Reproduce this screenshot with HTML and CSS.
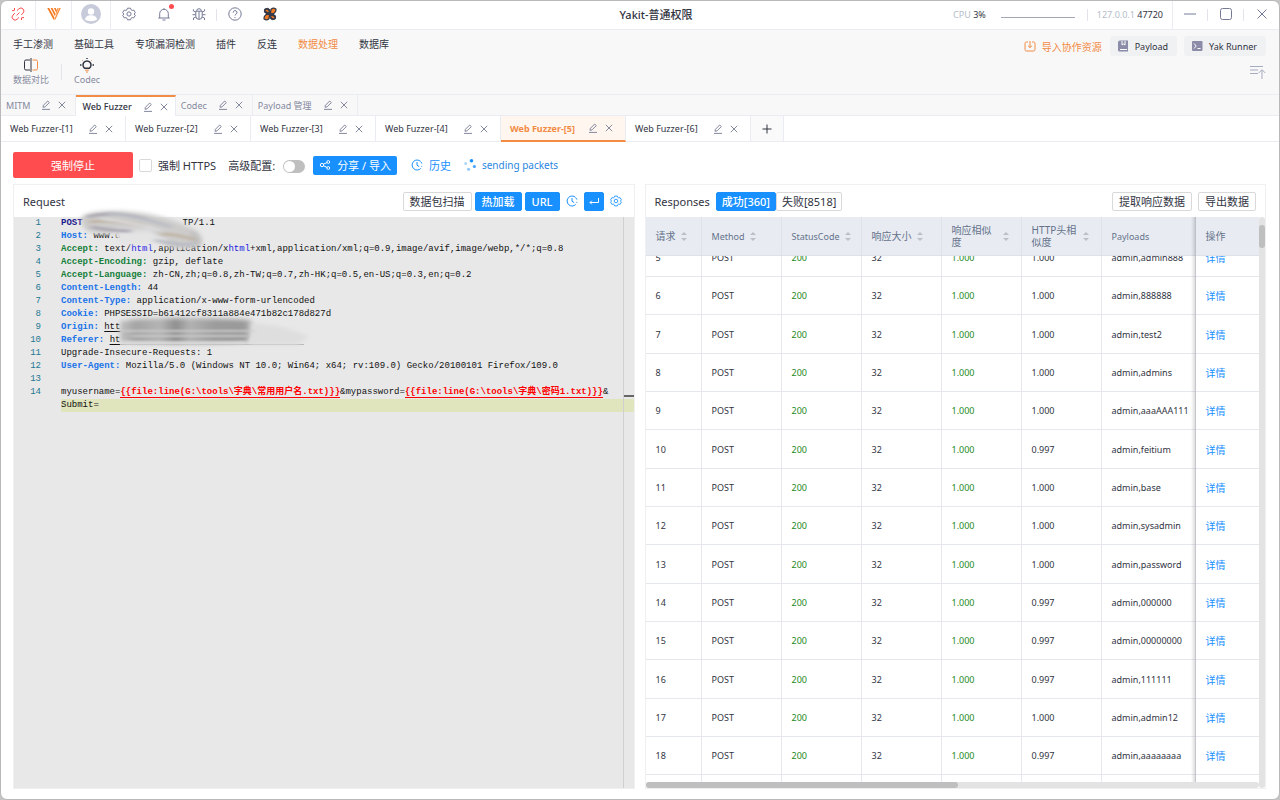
FILE: index.html
```html
<!doctype html>
<html lang="zh-CN">
<head>
  <meta charset="utf-8" />
  <meta name="viewport" content="width=device-width,initial-scale=1" />
  <title>Yakit-普通权限</title>
  <link rel="stylesheet" href="styles.css">
</head>

<body>
  <!-- shared icons -->
  <svg class="sprite" aria-hidden="true">
    <symbol id="i-edit" viewBox="0 0 10 10"><path d="M2 7.3 2.4 5.3 6.7 1l1.6 1.6-4.3 4.3zM1 9.4h8"/></symbol>
    <symbol id="i-close" viewBox="0 0 10 10"><path d="M1.8 1.8l6.4 6.4M8.2 1.8 1.8 8.2"/></symbol>
    <symbol id="i-gear" viewBox="0 0 14 14"><path d="M5.5 1.2h3l.5 1.5 1.2.7 1.6-.3 1.5 2.5L12.2 7l1.1 1.4-1.5 2.5-1.6-.3-1.2.7-.5 1.5h-3L5 11.3l-1.2-.7-1.6.3L.7 8.4 1.8 7 .7 5.6l1.5-2.5 1.6.3L5 2.7z"/><circle cx="7" cy="7" r="2.1"/></symbol>
    <symbol id="i-history" viewBox="0 0 12 12"><path d="M9.8 9.4A5 5 0 1 1 9.7 2.5M10.9 6.8a5 5 0 0 1-.3 1M10.1 3.1l.8 1.5M6 3v3.2l2.2 1.4"/></symbol>
  </svg>

  <div class="window">
    <header class="titlebar">
      <div class="title-left">
        <button class="cell red" type="button" aria-label="断开连接"><svg class="ic14" viewBox="0 0 14 14"><path d="M6 3.6 7.8 1.9a2.9 2.9 0 0 1 4.2 4.2L10.3 8M8 10.4l-1.8 1.8A2.9 2.9 0 0 1 2 8L3.8 6.2M5.6 8.4l2.8-2.8M3.5 1v2.3M1 3.6h2.2M10.6 10.6H13M10.5 10.8V13"/></svg></button>
        <button class="cell" type="button" aria-label="Yakit"><svg class="logo" viewBox="0 0 14 14"><path d="M.2 1h2l5.300 9.500L6.700 13zM3.600 1h1.900l3.200 6.300-.800 2zM6.900 1h1.800l1.200 2.600-.8 2z" fill="#f47b22"/><path d="M13.800 1h-1.500L7 13l1.400-.6zM11.700 1h-1.200L8.600 6.500l.5.700z" fill="#fa8a35"/></svg></button>
        <button class="cell avatar-cell" type="button" aria-label="用户"><svg class="avatar" viewBox="0 0 20 20"><circle cx="10" cy="10" r="10" fill="#c8ccda"/><circle cx="10" cy="7.5" r="3.2" fill="#fff"/><path d="M4 15.5c.5-3.3 3-4.3 6-4.3s5.5 1 6 4.3c-3 2.3-9 2.3-12 0z" fill="#fff"/></svg></button>
        <button class="tool" type="button" aria-label="设置"><svg class="ic14"><use href="#i-gear"/></svg></button>
        <button class="tool bell" type="button" aria-label="消息"><svg class="ic14" viewBox="0 0 14 14"><path d="M7 1.2v1M1.300 11h11.400M2.700 11V6.600a4.300 4.300 0 0 1 8.600 0V11M5.500 13h3"/></svg></button>
        <button class="tool" type="button" aria-label="反馈"><svg class="ic14" viewBox="0 0 14 14"><path d="M4.700 4a2.300 2.300 0 0 1 4.600 0M3.800 4.200h6.400v5a3.200 3.200 0 0 1-6.400 0zM7 4.500V12M3.800 7.700H.5M13.500 7.700h-3.300M3.900 5.200 1.400 4V2.300M10.100 5.200 12.600 4V2.300M4 10l-2.500 1v2M10 10l2.500 1v2"/></svg></button>
        <span class="sep"></span>
        <button class="tool" type="button" aria-label="帮助"><svg class="ic14" viewBox="0 0 14 14"><circle cx="7" cy="7" r="6.200"/><path d="M5.200 5.600a1.900 1.900 0 1 1 2.700 1.600q-.9.400-.9 1.300M7 10v.9"/></svg></button>
        <button class="tool" type="button" aria-label="插件商店"><svg class="ic14" viewBox="0 0 14 14"><path d="M1.500 2.200Q4.500.3 6.500 2.300L7 6.800 3 6.500Q.6 5.500 1.500 2.200zM12.500 11.800Q9.500 13.700 7.500 11.700L7 7.200l4 .3Q13.400 8.500 12.500 11.800z" fill="#333745" stroke="#333745"/><path d="M8 2.300Q10.500.2 12.800 2 13.500 4.500 11 6.300L7.300 6.800zM6 11.700Q3.500 13.800 1.200 12 .5 9.500 3 7.700L6.700 7.200z" fill="#f47b22" stroke="#333745" stroke-width="1.300"/><path d="M2.800 3.600Q4.500 3 5.300 5M11.200 10.400Q9.500 11 8.700 9" stroke="#f47b22" stroke-width="1.300"/></svg></button>
      </div>
      <h1>Yakit-普通权限</h1>
      <div class="title-right">
        <span class="stat">CPU <b>3%</b></span>
        <span class="cpu-line"></span>
        <span class="sep"></span>
        <span class="stat addr">127.0.0.1 <b>47720</b></span>
        <button class="wbtn first" type="button" aria-label="最小化"><svg class="ic14" viewBox="0 0 14 14"><path d="M1 7h12"/></svg></button>
        <span class="sep"></span>
        <button class="wbtn" type="button" aria-label="最大化"><svg class="ic14" viewBox="0 0 14 14"><rect x="1.500" y="1.500" width="11" height="11" rx="2"/></svg></button>
        <span class="sep"></span>
        <button class="wbtn" type="button" aria-label="关闭"><svg class="ic14" viewBox="0 0 14 14"><path d="M2.500 2.500l9 9M11.500 2.500l-9 9"/></svg></button>
      </div>
    </header>

    <div class="menu">
      <div class="menu-left">
        <nav class="menu-nav">
          <a href="#">手工渗测</a>
          <a href="#">基础工具</a>
          <a href="#">专项漏洞检测</a>
          <a href="#">插件</a>
          <a href="#">反连</a>
          <a href="#" class="on">数据处理</a>
          <a href="#">数据库</a>
        </nav>
        <div class="sub-menu">
          <button type="button"><svg class="ic16" viewBox="0 0 16 16"><path d="M7 3H3a1.500 1.500 0 0 0-1.500 1.500v7A1.500 1.500 0 0 0 3 13h4M8 1v14" stroke="#31343f"/><path d="M9.500 3H13a1.500 1.500 0 0 1 1.500 1.500v7A1.500 1.500 0 0 1 13 13H9.500" stroke="#f28b44"/></svg>数据对比</button>
          <span class="sep"></span>
          <button type="button"><svg class="ic16" viewBox="0 0 16 16"><path d="M5.800 11.300a4 4 0 1 1 4.400 0z" stroke="#31343f" stroke-width="1.500"/><path d="M8 1v1M1 8h1.500M13.500 8H15" stroke="#31343f" stroke-width="1.500"/><path d="M3 3l.7.7M13 3l-.7.700M6 13.200h4M7 15h2" stroke="#f28b44"/></svg>Codec</button>
        </div>
      </div>
      <div class="menu-right">
        <div class="quick">
          <button class="import" type="button"><svg class="ic12" viewBox="0 0 12 12"><path d="M4 2H2.500A1.500 1.500 0 0 0 1 3.500v6A1.500 1.500 0 0 0 2.500 11h7A1.500 1.500 0 0 0 11 9.500v-6A1.500 1.500 0 0 0 9.500 2H8M6 1v6.500M4 5.700l2 1.900 2-1.900"/></svg>导入协作资源</button>
          <button class="chip" type="button"><svg class="ic12" viewBox="0 0 12 12"><path d="M3 .5h8v11H2.500A1.500 1.500 0 0 1 1 10V2.500A2 2 0 0 1 3 .500z" fill="#8a8ca8" stroke="none"/><path d="M5 1v4l1.500-1L8 5V1M3 9.500h7" stroke="#fff"/></svg>Payload</button>
          <button class="chip" type="button"><svg class="ic12" viewBox="0 0 12 12"><rect x="1" y="1" width="10.500" height="10" rx="1" fill="#8a8ca8" stroke="none"/><path d="M3 3.500 5.200 6 3 8.500M6.500 8.500h3" stroke="#fff"/></svg>Yak Runner</button>
        </div>
        <button class="fold" type="button" aria-label="收起菜单"><svg class="ic16" viewBox="0 0 16 16"><path d="M0 2.500h13M0 6h8M0 9.500h8M12 15V6M8.700 9 12 5.700 15.300 9"/></svg></button>
      </div>
    </div>

    <div class="tabs">
      <div class="tab"><a href="#">MITM</a><button type="button" aria-label="编辑"><svg><use href="#i-edit"/></svg></button><button type="button" aria-label="关闭"><svg><use href="#i-close"/></svg></button></div>
      <div class="tab on"><a href="#">Web Fuzzer</a><button type="button" aria-label="编辑"><svg><use href="#i-edit"/></svg></button><button type="button" aria-label="关闭"><svg><use href="#i-close"/></svg></button></div>
      <div class="tab"><a href="#">Codec</a><button type="button" aria-label="编辑"><svg><use href="#i-edit"/></svg></button><button type="button" aria-label="关闭"><svg><use href="#i-close"/></svg></button></div>
      <div class="tab"><a href="#">Payload 管理</a><button type="button" aria-label="编辑"><svg><use href="#i-edit"/></svg></button><button type="button" aria-label="关闭"><svg><use href="#i-close"/></svg></button></div>
    </div>

    <div class="subtabs">
      <div class="subtab"><a href="#">Web Fuzzer-[1]</a><button type="button" aria-label="编辑"><svg><use href="#i-edit"/></svg></button><button type="button" aria-label="关闭"><svg><use href="#i-close"/></svg></button></div>
      <div class="subtab"><a href="#">Web Fuzzer-[2]</a><button type="button" aria-label="编辑"><svg><use href="#i-edit"/></svg></button><button type="button" aria-label="关闭"><svg><use href="#i-close"/></svg></button></div>
      <div class="subtab"><a href="#">Web Fuzzer-[3]</a><button type="button" aria-label="编辑"><svg><use href="#i-edit"/></svg></button><button type="button" aria-label="关闭"><svg><use href="#i-close"/></svg></button></div>
      <div class="subtab"><a href="#">Web Fuzzer-[4]</a><button type="button" aria-label="编辑"><svg><use href="#i-edit"/></svg></button><button type="button" aria-label="关闭"><svg><use href="#i-close"/></svg></button></div>
      <div class="subtab on"><a href="#">Web Fuzzer-[5]</a><button type="button" aria-label="编辑"><svg><use href="#i-edit"/></svg></button><button type="button" aria-label="关闭"><svg><use href="#i-close"/></svg></button></div>
      <div class="subtab"><a href="#">Web Fuzzer-[6]</a><button type="button" aria-label="编辑"><svg><use href="#i-edit"/></svg></button><button type="button" aria-label="关闭"><svg><use href="#i-close"/></svg></button></div>
      <button class="add" type="button" aria-label="新建"><svg viewBox="0 0 10 10"><path d="M5 .5v9M.5 5h9"/></svg></button>
    </div>

    <main>
      <div class="toolbar">
        <button class="stop" type="button">强制停止</button>
        <label class="opt"><input class="check" type="checkbox">强制 HTTPS</label>
        <label class="opt adv">高级配置:<input class="switch" type="checkbox" role="switch"></label>
        <button class="share" type="button"><svg class="ic12" viewBox="0 0 12 12"><circle cx="3" cy="6" r="1.700"/><circle cx="9.300" cy="3" r="1.400"/><circle cx="9.300" cy="9" r="1.400"/><path d="M4.500 5.200 8 3.600M4.500 6.800 8 8.400"/></svg>分享 / 导入</button>
        <button class="link history" type="button"><svg class="ic12"><use href="#i-history"/></svg>历史</button>
        <span class="link sending"><svg class="spin" viewBox="0 0 12 12"><circle cx="7.500" cy="1.800" r="1.800"/><circle cx="10.400" cy="7.500" r="1.600" opacity=".8"/><circle cx="4.600" cy="10.300" r="1.500" opacity=".5"/><circle cx="1.700" cy="4.400" r="1.500" opacity=".35"/></svg>sending packets</span>
      </div>

      <div class="panels">
        <section class="panel">
          <div class="panel-head">
            <h2>Request</h2>
            <div class="actions">
              <button class="btn" type="button">数据包扫描</button>
              <button class="btn primary" type="button">热加载</button>
              <button class="btn primary" type="button">URL</button>
              <button class="icon-btn" type="button" aria-label="历史"><svg class="ic12"><use href="#i-history"/></svg></button>
              <button class="btn primary enter" type="button" aria-label="换行"><svg class="ic12" viewBox="0 0 12 12"><path d="M10.500 3v4.500H2M3.800 5.700 2 7.500l1.800 1.800"/></svg></button>
              <button class="icon-btn" type="button" aria-label="设置"><svg class="ic12"><use href="#i-gear"/></svg></button>
            </div>
          </div>

          <div class="editor">
            <div class="line"><i>1</i><code><b class="navy">POST</b><span class="gap"></span>TP/1.1</code></div>
            <div class="line"><i>2</i><code><b class="blue">Host:</b> www.d</code></div>
            <div class="line"><i>3</i><code><b class="green">Accept:</b> text/<em>html</em>,application/x<em>html</em>+xml,application/xml;q=0.9,image/avif,image/webp,*/*;q=0.8</code></div>
            <div class="line"><i>4</i><code><b class="green">Accept-Encoding:</b> gzip, deflate</code></div>
            <div class="line"><i>5</i><code><b class="green">Accept-Language:</b> zh-CN,zh;q=0.8,zh-TW;q=0.7,zh-HK;q=0.5,en-US;q=0.3,en;q=0.2</code></div>
            <div class="line"><i>6</i><code><b class="blue">Content-Length:</b> 44</code></div>
            <div class="line"><i>7</i><code><b class="blue">Content-Type:</b> application/x-www-form-urlencoded</code></div>
            <div class="line"><i>8</i><code><b class="blue">Cookie:</b> PHPSESSID=b61412cf8311a884e471b82c178d827d</code></div>
            <div class="line"><i>9</i><code><b class="blue">Origin:</b> <u>htt</u></code></div>
            <div class="line"><i>10</i><code><b class="blue">Referer:</b> <u>ht</u><span class="tail"></span></code></div>
            <div class="line"><i>11</i><code>Upgrade-Insecure-Requests: 1</code></div>
            <div class="line"><i>12</i><code><b class="blue">User-Agent:</b> Mozilla/5.0 (Windows NT 10.0; Win64; x64; rv:109.0) Gecko/20100101 Firefox/109.0</code></div>
            <div class="line"><i>13</i><code></code></div>
            <div class="line"><i>14</i><code>myusername=<b class="tag">{{file:line(G:\tools\字典\常用用户名.txt)}}</b>&amp;mypassword=<b class="tag">{{file:line(G:\tools\字典\密码1.txt)}}</b>&amp;</code></div>
            <div class="line"><i></i><code class="current">Submit=</code></div>

            <!-- smears over the host names -->
            <svg class="smear" viewBox="0 0 330 150" aria-hidden="true">
              <defs>
                <filter id="soft" x="-20%" y="-60%" width="140%" height="220%"><feGaussianBlur stdDeviation="2"/></filter>
                <filter id="streak" x="-20%" y="-80%" width="140%" height="260%"><feGaussianBlur stdDeviation="3 1"/></filter>
                <linearGradient id="ink" x1="118" x2="254" y1="0" y2="0" gradientUnits="userSpaceOnUse">
                  <stop offset="0" stop-color="#c4c4c4"/><stop offset=".12" stop-color="#a4a4a4"/>
                  <stop offset=".3" stop-color="#b4b4b4"/><stop offset=".42" stop-color="#8f8f8f"/>
                  <stop offset=".52" stop-color="#b2b2b2"/><stop offset=".7" stop-color="#9c9c9c"/>
                  <stop offset=".92" stop-color="#999"/><stop offset="1" stop-color="#cfcfcf"/>
                </linearGradient>
              </defs>
              <g filter="url(#soft)">
                <path d="M80 1Q86-7 120-6 160-4 190 11 205 18 200 28 185 36 160 28 140 24 118 16 90 20 82 10z" fill="#cdcccb"/>
                <path d="M112 12H150L158 26H118z" fill="#dfdfe0"/>
                <path d="M118 16H152L168 24 160 27H116z" fill="#e4e4e5"/>
              </g>
              <g filter="url(#streak)" fill="none">
                <path d="M86 0q26-7 62 3M90 10q20 4 40 4" stroke="#aca7b2" stroke-width="3"/>
                <path d="M88 5q30-3 56 4M160 17q16 0 34 6" stroke="#c0b4a4" stroke-width="3"/>
                <path d="M106-4q36 4 64 14M154 23q24 6 40 4" stroke="#b9bcc4" stroke-width="3"/>
                <path d="M100 2q30 2 60 12" stroke="#e0e0e2" stroke-width="2"/>
                <path d="M192 14l5 14" stroke="#a9a9a9" stroke-width="2"/>
              </g>
              <path d="M119 104Q160 99 250 103L254 112 248 125Q175 129 119 125z" fill="url(#ink)" filter="url(#soft)"/>
              <path d="M250 106Q286 108 308 120L296 128H248z" fill="#dedede" filter="url(#soft)"/>
              <g filter="url(#streak)" fill="none">
                <path d="M120 114h132M130 119h118" stroke="#c9c9c9" stroke-width="2"/>
                <path d="M122 126h124" stroke="#dcdcdc" stroke-width="3"/>
              </g>
            </svg>
            <div class="ruler"><span></span></div>
          </div>
        </section>

        <section class="panel">
          <div class="panel-head">
            <h2>Responses</h2>
            <div class="group">
              <button class="btn primary" type="button">成功[360]</button>
              <button class="btn" type="button">失败[8518]</button>
            </div>
            <div class="actions wide">
              <button class="btn" type="button">提取响应数据</button>
              <button class="btn" type="button">导出数据</button>
            </div>
          </div>

          <div class="table-area">
            <div class="table-scroll" id="tableScroll">
              <table>
                <colgroup>
                  <col class="c-id"><col class="c-mid"><col class="c-mid"><col class="c-mid"><col class="c-mid"><col class="c-mid"><col class="c-payload"><col class="c-op">
                </colgroup>
                <thead>
                  <tr>
                    <th class="cn"><div>请求<span class="sorter"></span></div></th>
                    <th><div>Method<span class="sorter"></span></div></th>
                    <th><div>StatusCode<span class="sorter"></span></div></th>
                    <th class="cn"><div>响应大小<span class="sorter"></span></div></th>
                    <th class="cn long"><div>响应相似度<span class="sorter"></span></div></th>
                    <th class="cn long"><div>HTTP头相似度<span class="sorter"></span></div></th>
                    <th><div>Payloads</div></th>
                    <th class="cn"><div>操作</div></th>
                  </tr>
                </thead>
                <tbody id="rows"></tbody>
              </table>
            </div>
            <div class="vbar"><span></span></div>
            <div class="hbar"><span></span></div>
          </div>
        </section>
      </div>
    </main>
  </div>

  <script>
    // [id, header similarity, payload]
    const data = [
      [5, "1.000", "admin888"],
      [6, "1.000", "888888"],
      [7, "1.000", "test2"],
      [8, "1.000", "admins"],
      [9, "1.000", "aaaAAA111"],
      [10, "0.997", "feitium"],
      [11, "1.000", "base"],
      [12, "1.000", "sysadmin"],
      [13, "1.000", "password"],
      [14, "0.997", "000000"],
      [15, "0.997", "00000000"],
      [16, "0.997", "111111"],
      [17, "1.000", "admin12"],
      [18, "0.997", "aaaaaaaa"]
    ];

    const rows = document.getElementById("rows");
    rows.innerHTML = data.map(([id, sim, pwd]) => `
      <tr>
        <td>${id}</td><td>POST</td><td class="ok">200</td><td>32</td>
        <td class="ok">1.000</td><td>${sim}</td><td>admin,${pwd}</td>
        <td><a href="#">详情</a></td>
      </tr>`).join("") + "<tr>" + "<td></td>".repeat(8) + "</tr>";

    document.getElementById("tableScroll").scrollTop = 17;
  </script>
</body>
</html>
```

FILE: styles.css
```css
:root{
  --font: "Noto Sans", "Noto Sans CJK SC", sans-serif;
  --mono: "Liberation Mono", "Noto Sans CJK SC", monospace;
  --orange: #f28b44;
  --blue: #1890ff;
  --ink: #31343f;
  --muted: #85899e;
  --line: #eaecf3;
}

*{ box-sizing:border-box }
body{
  margin:0;
  font-family:var(--font);
  font-size:10px;
  color:var(--ink);
  background:#c4c4c4;
}
h1, h2{ margin:0; font-weight:500; }
a{ color:inherit; text-decoration:none; }
button{
  appearance:none;
  border:0;
  padding:0;
  background:transparent;
  font:inherit;
  color:inherit;
  white-space:nowrap;
  cursor:pointer;
}
svg{ display:block; fill:none; stroke:currentColor; stroke-width:1; flex:none; }
.sprite{ position:absolute; width:0; height:0; }
.ic12{ width:12px; height:12px; }
.ic14{ width:14px; height:14px; }
.ic16{ width:16px; height:16px; }
.sep{ width:1px; height:12px; background:#e2e4ec; flex:none; }

.window{
  height:100vh;
  display:flex;
  flex-direction:column;
  overflow:hidden;
  background:#fff;
  border:1px solid #b9b9b9;
  border-radius:7px;
}

/* Title bar */
.titlebar{
  height:29px;
  flex:none;
  display:grid;
  grid-template-columns:1fr auto 1fr;
  align-items:center;
  border-bottom:1px solid var(--line);
  color:#757a96;
}
.titlebar h1{ margin-left:32px; padding-bottom:2px; font-size:11px; color:var(--ink); }
.title-left, .title-right{ display:flex; align-items:center; height:28px; }
.title-right{ justify-content:flex-end; }
.cell, .tool, .wbtn{
  width:35px; height:28px;
  padding-bottom:2px;
  display:grid;
  place-items:center;
}
.cell{ border-right:1px solid var(--line); }
.cell + .cell{ width:36px; }
.cell.red{ color:#ff4d4f; }
.cell.avatar-cell{ width:39px; }
.avatar{ width:20px; height:20px; stroke:none; }
.logo{ width:14px; height:14px; stroke:none; }
.tool{ position:relative; }
.bell::after{
  content:"";
  position:absolute;
  top:3px; right:7px;
  width:5px; height:5px;
  border-radius:50%;
  background:#ff4d4f;
}
.stat{ padding-bottom:2px; font-size:9px; color:#b4bbca; }
.stat b{ font-weight:400; color:var(--ink); }
.cpu-line{ width:74px; height:1px; margin:4px 12px 0 15px; background:#a3a6b6; }
.addr{ margin:0 9px; }
.wbtn.first{ border-left:1px solid var(--line); }

/* Menu */
.menu{
  flex:none;
  display:flex;
  justify-content:space-between;
  height:65px;
  padding:6px 13px 0 12px;
  background:#f8f8f8;
  border-bottom:1px solid var(--line);
}
.menu-nav{ display:flex; gap:21px; line-height:16px; }
.menu-nav .on{ color:var(--orange); }
.sub-menu{ display:flex; align-items:center; gap:12px; margin-top:5px; }
.sub-menu button{
  display:flex;
  flex-direction:column;
  align-items:center;
  gap:1px;
  font-size:9px;
  line-height:12px;
  color:var(--muted);
}
.sub-menu .sep{ height:16px; }
.menu-right{ display:flex; flex-direction:column; align-items:flex-end; gap:8px; }
.quick{ display:flex; gap:7px; }
.import, .chip{ display:flex; align-items:center; height:20px; }
.import{ gap:6px; color:var(--orange); padding-right:1px; }
.chip{ gap:6px; padding:0 9px 0 7px; background:#f0f1f3; border-radius:3px; font-size:9px; }
.fold{ color:#a5abc0; }

/* Page tabs */
.tabs{
  flex:none;
  display:flex;
  height:21px;
  background:#f8f8f8;
  border-bottom:1px solid var(--line);
}
.tab, .subtab{ display:flex; align-items:center; border-right:1px solid var(--line); font-size:9px; }
.tab svg, .subtab svg{ width:10px; height:10px; color:#85899e; }
.tab button + button, .subtab button + button{ margin-left:6px; }
.tab{ padding:0 8px 0 5px; color:var(--muted); }
.tab a{ margin-right:11px; }
.tab.on{
  height:21px;
  padding:0 6px;
  background:#fff;
  color:var(--ink);
  font-weight:500;
  border-top:2px solid var(--orange);
}

.subtabs{ flex:none; display:flex; height:26px; border-bottom:1px solid var(--line); }
.subtab{ width:125px; padding:0 11px 0 9px; }
.subtab a{ flex:1; white-space:nowrap; }
.subtab.on{
  height:26px;
  background:#fff6f0;
  border-bottom:2px solid var(--orange);
}
.subtab.on a{ color:var(--orange); font-weight:700; }
.add{ width:33px; display:grid; place-items:center; background:#fafafa; border-right:1px solid var(--line); }
.add svg{ width:10px; height:10px; }

/* Work area */
main{
  flex:1;
  min-height:0;
  display:flex;
  flex-direction:column;
  gap:6px;
  padding:10px 13px 10px 12px;
}
.toolbar{ display:flex; align-items:center; height:26px; font-size:11px; flex:none; }
.stop{ width:120px; height:26px; background:#ff4d4f; color:#fff; border-radius:2px; }
.opt{ display:flex; align-items:center; gap:6px; margin-left:6px; }
.opt.adv{ margin-left:12px; gap:8px; }
.check{
  appearance:none;
  width:13px; height:13px;
  margin:0;
  border:1px solid #d9d9d9;
  border-radius:2px;
  background:#fff;
}
.switch{
  appearance:none;
  width:22px; height:13px;
  margin:2px 0 0;
  padding:1px;
  border-radius:7px;
  background:#bfbfbf;
}
.switch::before{
  content:"";
  display:block;
  width:11px; height:11px;
  border-radius:50%;
  background:#fff;
}
.share{
  display:flex;
  align-items:center;
  gap:6px;
  height:19px;
  margin-left:8px;
  padding:0 6px;
  background:var(--blue);
  color:#fff;
  border-radius:2px;
}
.link{ display:flex; align-items:center; gap:6px; color:#2a87e0; }
.history{ margin-left:14px; color:var(--blue); }
.sending{ margin-left:13px; font-size:10px; }
.spin{ width:12px; height:12px; fill:var(--blue); stroke:none; }

.panels{
  flex:1;
  min-height:0;
  display:grid;
  grid-template-columns:1fr 1fr;
  gap:10px;
}
.panel{
  min-width:0;
  min-height:0;
  display:flex;
  flex-direction:column;
  border:1px solid #f0f0f0;
}
.panel-head{ display:flex; align-items:center; height:32px; flex:none; padding:0 9px; }
.panel-head h2{ font-size:11px; font-weight:400; }
.actions{ display:flex; align-items:center; gap:3px; margin-left:auto; }
.actions.wide{ gap:6px; }
.btn{
  height:19px;
  padding:0 6px;
  border:1px solid #d9d9d9;
  border-radius:2px;
  background:#fff;
  font-size:11px;
  line-height:17px;
}
.btn.primary{ background:var(--blue); border-color:var(--blue); color:#fff; font-weight:500; }
.btn.enter{ padding:0 3px; }
.icon-btn{ color:var(--blue); padding:0 3px; }
.group{ display:flex; margin-left:6px; }
.group .btn{ padding:0 5px; }

/* Request editor */
.editor{
  flex:1;
  min-height:0;
  position:relative;
  background:#e8e8e8;
  font-family:var(--mono);
  font-size:9px;
  line-height:13px;
  color:#111;
}
.line{ display:grid; grid-template-columns:27px 1fr; gap:20px; height:13px; }
.line i{ font-style:normal; text-align:right; color:#237893; }
.line code{ font:inherit; white-space:pre; }
.line em{ font-style:normal; color:#2020e0; }
.line u{ text-underline-offset:2px; }
.navy{ color:#1a1a8c; }
.blue{ color:#1a73e8; }
.green{ color:#157f3b; }
.tag{ color:#f00; border-bottom:1px solid #f00; }
.line .current{ background:#e1e5bd; }
.gap{ display:inline-block; width:100px; }
.tail{ display:inline-block; width:184px; height:3px; vertical-align:bottom; border-top:1px solid #b5b5b5; }
.smear{ position:absolute; left:-13px; top:0; width:330px; height:150px; stroke:none; overflow:visible; }
.ruler{
  position:absolute;
  top:0; right:0; bottom:0;
  width:11px;
  border-left:1px solid #d0d0d0;
}
.ruler span{ display:block; height:2px; margin-top:178px; background:#666; }

/* Result table */
.table-area{
  flex:1;
  min-height:0;
  display:grid;
  grid-template-columns:1fr 6px;
  grid-template-rows:1fr 6px;
}
.table-scroll{ overflow:hidden; min-height:0; }
table{
  width:100%;
  table-layout:fixed;
  border-collapse:separate;
  border-spacing:0;
  font-size:9px;
}
.c-id{ width:56px; }
.c-mid{ width:80px; }
.c-payload{ width:94px; }
.c-op{ width:64px; }
th{
  position:sticky;
  top:0;
  z-index:2;
  height:39px;
  padding:0 12px 0 10px;
  background:#e8ecf2;
  border-right:1px solid #dde1e8;
  border-bottom:1px solid #dde1e8;
  font-weight:400;
  text-align:left;
  color:#65728a;
}
th.cn{ font-size:10px; line-height:12px; }
th div{ display:flex; align-items:center; gap:5px; }
th.long div{ justify-content:space-between; gap:3px; }
.sorter{ display:grid; gap:3px; flex:none; }
.sorter::before, .sorter::after{
  content:"";
  border:3px solid transparent;
}
.sorter::before{ border-top:0; border-bottom-color:#bbbfc6; }
.sorter::after{ border-bottom:0; border-top-color:#bbbfc6; }
td{
  height:38px;
  padding:0 0 0 10px;
  border-right:1px solid #e4e7ee;
  border-bottom:1px solid #e4e7ee;
  white-space:nowrap;
}
tbody tr:nth-child(3n) td{ height:39px; }
td:last-child{ position:relative; }

/* shadow on the left of the pinned column */
th:last-child::before, td:last-child::before{
  content:"";
  position:absolute;
  top:0; bottom:-1px; left:-5px;
  width:5px;
  background:linear-gradient(to left, rgba(0,0,0,.16), transparent);
}
td.ok{ color:#1e8a1e; }
td a{ color:var(--blue); font-size:10px; }

.vbar, .hbar{ background:#e3e3e3; border-radius:3px; }
.vbar span, .hbar span{ display:block; background:#bfbfbf; border-radius:3px; }
.vbar{ grid-row:1 / 3; grid-column:2; padding-top:8px; }
.vbar span{ height:23px; }
.hbar{ grid-row:2; grid-column:1; }
.hbar span{ width:51%; height:6px; }
```
